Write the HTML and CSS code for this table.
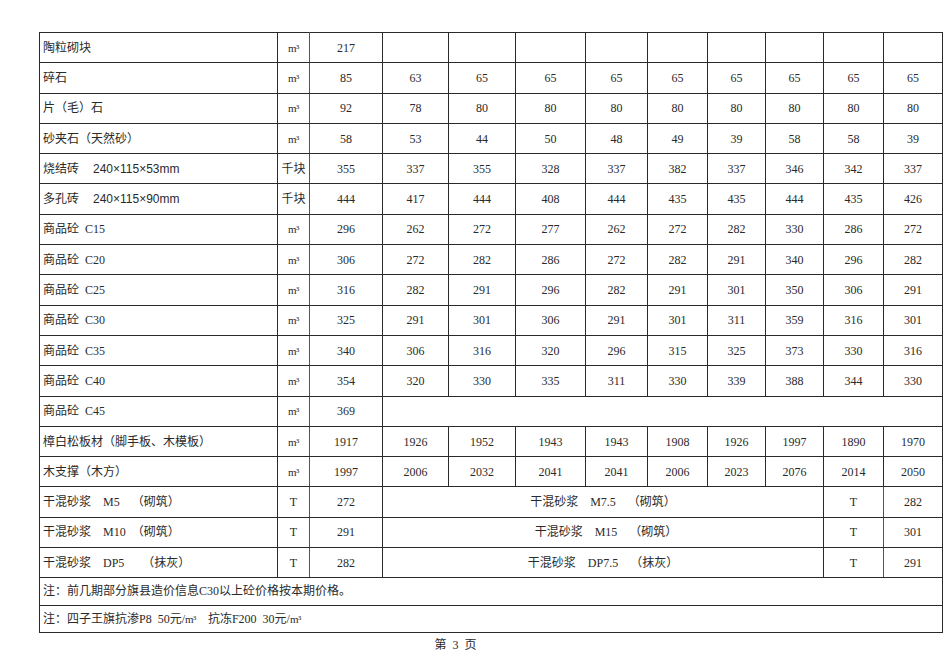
FILE: index.html
```html
<!DOCTYPE html>
<html lang="zh-CN">
<head>
<meta charset="utf-8">
<title>材料价格表 第3页</title>
<link rel="stylesheet" href="styles.css">
</head>
<body>
<div class="page">
  <table class="price">
    <colgroup>
      <col class="c-name"><col class="c-unit"><col class="c-v1"><col class="c-v2"><col class="c-v3"><col class="c-v4"><col class="c-v5"><col class="c-v6"><col class="c-v7"><col class="c-v8"><col class="c-v9"><col class="c-v10">
    </colgroup>
    <tbody>
      <tr><td class="name">陶粒砌块</td><td class="unit"><span class="m3">m³</span></td><td>217</td><td></td><td></td><td></td><td></td><td></td><td></td><td></td><td></td><td></td></tr>
      <tr><td class="name">碎石</td><td class="unit"><span class="m3">m³</span></td><td>85</td><td>63</td><td>65</td><td>65</td><td>65</td><td>65</td><td>65</td><td>65</td><td>65</td><td>65</td></tr>
      <tr><td class="name">片（毛）石</td><td class="unit"><span class="m3">m³</span></td><td>92</td><td>78</td><td>80</td><td>80</td><td>80</td><td>80</td><td>80</td><td>80</td><td>80</td><td>80</td></tr>
      <tr><td class="name">砂夹石（天然砂）</td><td class="unit"><span class="m3">m³</span></td><td>58</td><td>53</td><td>44</td><td>50</td><td>48</td><td>49</td><td>39</td><td>58</td><td>58</td><td>39</td></tr>
      <tr><td class="name">烧结砖<span class="dim">240×115×53mm</span></td><td class="unit">千块</td><td>355</td><td>337</td><td>355</td><td>328</td><td>337</td><td>382</td><td>337</td><td>346</td><td>342</td><td>337</td></tr>
      <tr><td class="name">多孔砖<span class="dim">240×115×90mm</span></td><td class="unit">千块</td><td>444</td><td>417</td><td>444</td><td>408</td><td>444</td><td>435</td><td>435</td><td>444</td><td>435</td><td>426</td></tr>
      <tr><td class="name">商品砼&ensp;C15</td><td class="unit"><span class="m3">m³</span></td><td>296</td><td>262</td><td>272</td><td>277</td><td>262</td><td>272</td><td>282</td><td>330</td><td>286</td><td>272</td></tr>
      <tr><td class="name">商品砼&ensp;C20</td><td class="unit"><span class="m3">m³</span></td><td>306</td><td>272</td><td>282</td><td>286</td><td>272</td><td>282</td><td>291</td><td>340</td><td>296</td><td>282</td></tr>
      <tr><td class="name">商品砼&ensp;C25</td><td class="unit"><span class="m3">m³</span></td><td>316</td><td>282</td><td>291</td><td>296</td><td>282</td><td>291</td><td>301</td><td>350</td><td>306</td><td>291</td></tr>
      <tr><td class="name">商品砼&ensp;C30</td><td class="unit"><span class="m3">m³</span></td><td>325</td><td>291</td><td>301</td><td>306</td><td>291</td><td>301</td><td>311</td><td>359</td><td>316</td><td>301</td></tr>
      <tr><td class="name">商品砼&ensp;C35</td><td class="unit"><span class="m3">m³</span></td><td>340</td><td>306</td><td>316</td><td>320</td><td>296</td><td>315</td><td>325</td><td>373</td><td>330</td><td>316</td></tr>
      <tr><td class="name">商品砼&ensp;C40</td><td class="unit"><span class="m3">m³</span></td><td>354</td><td>320</td><td>330</td><td>335</td><td>311</td><td>330</td><td>339</td><td>388</td><td>344</td><td>330</td></tr>
      <tr><td class="name">商品砼&ensp;C45</td><td class="unit"><span class="m3">m³</span></td><td>369</td><td class="blank" colspan="9"></td></tr>
      <tr><td class="name">樟白松板材（脚手板、木模板）</td><td class="unit"><span class="m3">m³</span></td><td>1917</td><td>1926</td><td>1952</td><td>1943</td><td>1943</td><td>1908</td><td>1926</td><td>1997</td><td>1890</td><td>1970</td></tr>
      <tr><td class="name">木支撑（木方）</td><td class="unit"><span class="m3">m³</span></td><td>1997</td><td>2006</td><td>2032</td><td>2041</td><td>2041</td><td>2006</td><td>2023</td><td>2076</td><td>2014</td><td>2050</td></tr>
      <tr><td class="name">干混砂浆&ensp;&ensp;M5&ensp;&ensp;（砌筑）</td><td class="unit">T</td><td>272</td><td class="merged" colspan="7">干混砂浆&ensp;&ensp;M7.5&ensp;&ensp;（砌筑）</td><td class="unit">T</td><td>282</td></tr>
      <tr><td class="name">干混砂浆&ensp;&ensp;M10&ensp;（砌筑）</td><td class="unit">T</td><td>291</td><td class="merged" colspan="7">&ensp;干混砂浆&ensp;&ensp;M15&ensp;&ensp;（砌筑）</td><td class="unit">T</td><td>301</td></tr>
      <tr><td class="name">干混砂浆&ensp;&ensp;DP5&ensp;&ensp;&ensp;（抹灰）</td><td class="unit">T</td><td>282</td><td class="merged" colspan="7">干混砂浆&ensp;&ensp;DP7.5&ensp;&ensp;（抹灰）</td><td class="unit">T</td><td>291</td></tr>
      <tr class="note"><td class="name" colspan="12">注：前几期部分旗县造价信息C30以上砼价格按本期价格。</td></tr>
      <tr class="note"><td class="name" colspan="12">注：四子王旗抗渗P8&ensp;50元/<span class="m3">m³</span>&ensp;&ensp;抗冻F200&ensp;30元/<span class="m3">m³</span></td></tr>
    </tbody>
  </table>
  <div class="footer">第&ensp;3&ensp;页</div>
</div>
</body>
</html>
```
FILE: styles.css
```css
html, body {
  margin: 0;
  padding: 0;
  background: #ffffff;
}

.page {
  padding: 32px 0 0 39px;
  width: 911px;
  font-family: "Liberation Serif", "Noto Sans CJK SC", serif;
  font-size: 12px;
  color: #2a2a2a;
}

.price {
  border-collapse: collapse;
  table-layout: fixed;
  width: 903px;
  border: 1px solid #222;
}

.c-name { width: 238px; }
.c-unit { width: 32px; }
.c-v1 { width: 73px; }
.c-v2 { width: 66px; }
.c-v3 { width: 67px; }
.c-v4 { width: 70px; }
.c-v5 { width: 62px; }
.c-v6 { width: 60px; }
.c-v7 { width: 58px; }
.c-v8 { width: 58px; }
.c-v9 { width: 60px; }
.c-v10 { width: 59px; }

.price tr {
  height: 30.3px;
}

.price tr.note {
  height: 27.3px;
}

.price td {
  border: 1px solid #2a2a2a;
  padding: 0;
  text-align: center;
  vertical-align: middle;
  white-space: nowrap;
  line-height: 14px;
}

.price td.name {
  text-align: left;
  padding-left: 3px;
}

.price td.unit {
  border-left-color: #555;
  border-right-color: #555;
}

.m3 {
  font-size: 11px;
  letter-spacing: -0.5px;
}

.dim {
  font-family: "Liberation Sans", sans-serif;
  font-size: 12px;
  margin-left: 14px;
}

.price td.merged {
  text-align: center;
}

.footer {
  width: 911px;
  margin-left: -39px;
  margin-top: 5px;
  text-align: center;
  line-height: 14px;
}
```
